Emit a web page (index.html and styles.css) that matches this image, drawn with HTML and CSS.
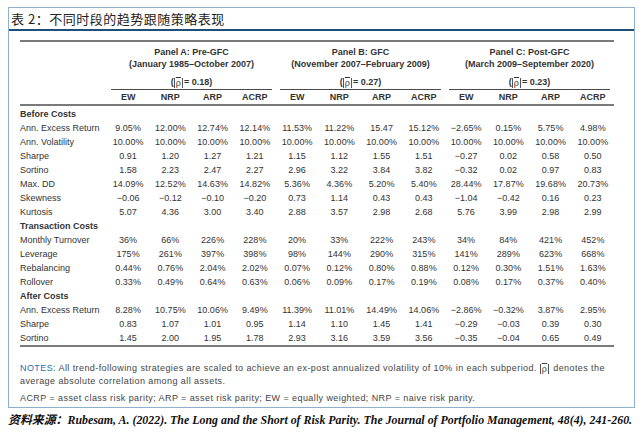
FILE: index.html
```html
<!DOCTYPE html>
<html lang="zh">
<head>
<meta charset="utf-8">
<link rel="stylesheet" href="styles.css">
</head>
<body>
<div class="frame">
  <div class="title">表 2：不同时段的趋势跟随策略表现</div>
  <div class="content">
    <table class="data">
      <colgroup>
        <col class="c-label">
        <col span="12" class="c-num">
      </colgroup>
      <thead>
        <tr class="panels">
          <th></th>
          <th colspan="4"><div class="panel"><div>Panel A: Pre-GFC</div><div>(January 1985–October 2007)</div><div class="corr">(<span class="rho"><span class="bar">ρ</span></span>= 0.18)</div></div></th>
          <th colspan="4"><div class="panel"><div>Panel B: GFC</div><div>(November 2007–February 2009)</div><div class="corr">(<span class="rho"><span class="bar">ρ</span></span>= 0.27)</div></div></th>
          <th colspan="4"><div class="panel"><div>Panel C: Post-GFC</div><div>(March 2009–September 2020)</div><div class="corr">(<span class="rho"><span class="bar">ρ</span></span>= 0.23)</div></div></th>
        </tr>
        <tr class="heads">
          <th></th>
          <th>EW</th><th>NRP</th><th>ARP</th><th>ACRP</th>
          <th>EW</th><th>NRP</th><th>ARP</th><th>ACRP</th>
          <th>EW</th><th>NRP</th><th>ARP</th><th>ACRP</th>
        </tr>
      </thead>
      <tbody>
        <tr class="sec"><td colspan="13">Before Costs</td></tr>
        <tr><td>Ann. Excess Return</td><td>9.05%</td><td>12.00%</td><td>12.74%</td><td>12.14%</td><td>11.53%</td><td>11.22%</td><td>15.47</td><td>15.12%</td><td>−2.65%</td><td>0.15%</td><td>5.75%</td><td>4.98%</td></tr>
        <tr><td>Ann. Volatility</td><td>10.00%</td><td>10.00%</td><td>10.00%</td><td>10.00%</td><td>10.00%</td><td>10.00%</td><td>10.00%</td><td>10.00%</td><td>10.00%</td><td>10.00%</td><td>10.00%</td><td>10.00%</td></tr>
        <tr><td>Sharpe</td><td>0.91</td><td>1.20</td><td>1.27</td><td>1.21</td><td>1.15</td><td>1.12</td><td>1.55</td><td>1.51</td><td>−0.27</td><td>0.02</td><td>0.58</td><td>0.50</td></tr>
        <tr><td>Sortino</td><td>1.58</td><td>2.23</td><td>2.47</td><td>2.27</td><td>2.96</td><td>3.22</td><td>3.84</td><td>3.82</td><td>−0.32</td><td>0.02</td><td>0.97</td><td>0.83</td></tr>
        <tr><td>Max. DD</td><td>14.09%</td><td>12.52%</td><td>14.63%</td><td>14.82%</td><td>5.36%</td><td>4.36%</td><td>5.20%</td><td>5.40%</td><td>28.44%</td><td>17.87%</td><td>19.68%</td><td>20.73%</td></tr>
        <tr><td>Skewness</td><td>−0.06</td><td>−0.12</td><td>−0.10</td><td>−0.20</td><td>0.73</td><td>1.14</td><td>0.43</td><td>0.43</td><td>−1.04</td><td>−0.42</td><td>0.16</td><td>0.23</td></tr>
        <tr><td>Kurtosis</td><td>5.07</td><td>4.36</td><td>3.00</td><td>3.40</td><td>2.88</td><td>3.57</td><td>2.98</td><td>2.68</td><td>5.76</td><td>3.99</td><td>2.98</td><td>2.99</td></tr>
        <tr class="sec"><td colspan="13">Transaction Costs</td></tr>
        <tr><td>Monthly Turnover</td><td>36%</td><td>66%</td><td>226%</td><td>228%</td><td>20%</td><td>33%</td><td>222%</td><td>243%</td><td>34%</td><td>84%</td><td>421%</td><td>452%</td></tr>
        <tr><td>Leverage</td><td>175%</td><td>261%</td><td>397%</td><td>398%</td><td>98%</td><td>144%</td><td>290%</td><td>315%</td><td>141%</td><td>289%</td><td>623%</td><td>668%</td></tr>
        <tr><td>Rebalancing</td><td>0.44%</td><td>0.76%</td><td>2.04%</td><td>2.02%</td><td>0.07%</td><td>0.12%</td><td>0.80%</td><td>0.88%</td><td>0.12%</td><td>0.30%</td><td>1.51%</td><td>1.63%</td></tr>
        <tr><td>Rollover</td><td>0.33%</td><td>0.49%</td><td>0.64%</td><td>0.63%</td><td>0.06%</td><td>0.09%</td><td>0.17%</td><td>0.19%</td><td>0.08%</td><td>0.17%</td><td>0.37%</td><td>0.40%</td></tr>
        <tr class="sec"><td colspan="13">After Costs</td></tr>
        <tr><td>Ann. Excess Return</td><td>8.28%</td><td>10.75%</td><td>10.06%</td><td>9.49%</td><td>11.39%</td><td>11.01%</td><td>14.49%</td><td>14.06%</td><td>−2.86%</td><td>−0.32%</td><td>3.87%</td><td>2.95%</td></tr>
        <tr><td>Sharpe</td><td>0.83</td><td>1.07</td><td>1.01</td><td>0.95</td><td>1.14</td><td>1.10</td><td>1.45</td><td>1.41</td><td>−0.29</td><td>−0.03</td><td>0.39</td><td>0.30</td></tr>
        <tr><td>Sortino</td><td>1.45</td><td>2.00</td><td>1.95</td><td>1.78</td><td>2.93</td><td>3.16</td><td>3.59</td><td>3.56</td><td>−0.35</td><td>−0.04</td><td>0.65</td><td>0.49</td></tr>
      </tbody>
    </table>
    <p class="notes"><span class="notes-label">NOTES:</span> All trend-following strategies are scaled to achieve an ex-post annualized volatility of 10% in each subperiod. <span class="rho"><span class="bar">ρ</span></span> denotes the<br>average absolute correlation among all assets.</p>
    <p class="notes abbr">ACRP = asset class risk parity; ARP = asset risk parity; EW = equally weighted; NRP = naive risk parity.</p>
  </div>
</div>
<div class="source"><span class="source-cn">资料来源：</span>Rubesam, A. (2022). The Long and the Short of Risk Parity. The Journal of Portfolio Management, 48(4), 241-260.</div>
</body>
</html>
```

FILE: styles.css
```css
html, body {
  margin: 0;
  padding: 0;
  background: #ffffff;
}

body {
  font-family: "Liberation Sans", Arial, sans-serif;
  color: #333333;
}

.frame {
  box-sizing: border-box;
  margin: 7px 0 0 8px;
  width: 627px;
  height: 401px;
  border: 1px solid #8fb0cc;
}

.title {
  height: 21px;
  line-height: 21px;
  padding-left: 2px;
  font-family: "Noto Sans CJK SC", sans-serif;
  font-size: 13px;
  letter-spacing: 0.5px;
  color: #222222;
  border-bottom: 2px solid #1f4e79;
}

.content {
  padding: 9px 19px 0 11px;
}

.data {
  width: 594px;
  table-layout: fixed;
  border-collapse: collapse;
  border-top: 2px solid #7a7a7a;
  border-bottom: 2px solid #7a7a7a;
  font-size: 9px;
}

.c-label { width: 87px; }

.data th, .data td {
  padding: 0;
  white-space: nowrap;
}

.panels th {
  font-weight: bold;
  text-align: center;
  vertical-align: top;
  line-height: 12px;
}

.panel {
  margin: 0 4px;
  padding-top: 4px;
  border-bottom: 1px solid #4a4a4a;
}

.panel .corr {
  margin-top: 6px;
  padding-bottom: 1px;
}

.rho {
  display: inline-block;
  border-left: 1px solid #555;
  border-right: 1px solid #555;
  line-height: 10px;
  padding: 0 1px;
  margin-right: 1px;
  font-weight: normal;
  vertical-align: middle;
}

.bar {
  text-decoration: overline;
}

.heads th {
  height: 14px;
  line-height: 14px;
  font-weight: bold;
  text-align: center;
  border-bottom: 2px solid #7a7a7a;
}

.data tbody td {
  height: 14px;
  line-height: 14px;
  text-align: center;
}

.data tbody tr:first-child td {
  padding-top: 1px;
}

.data tbody td:first-child {
  text-align: left;
}

.data tbody tr.sec td {
  font-weight: bold;
  text-align: left;
}

.notes {
  margin: 15px 0 0 0;
  font-size: 9px;
  line-height: 13px;
  color: #444444;
  letter-spacing: 0.42px;
  white-space: nowrap;
}

.notes.abbr {
  margin-top: 4px;
}

.notes-label {
  color: #2a6db5;
}

.source {
  margin: 3px 0 0 8px;
  line-height: 16px;
  font-family: "Liberation Serif", "Noto Sans CJK SC", serif;
  font-size: 11.9px;
  font-weight: bold;
  font-style: italic;
  color: #111111;
  white-space: nowrap;
}

.source-cn {
  font-family: "Noto Sans CJK SC", sans-serif;
}
```
